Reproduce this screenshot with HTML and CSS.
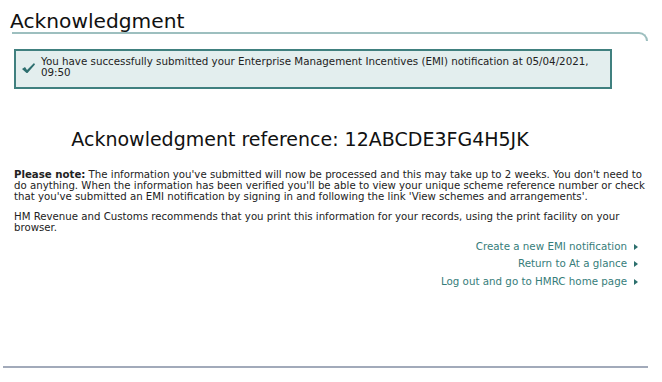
FILE: index.html
```html
<!DOCTYPE html>
<html lang="en">
<head>
<meta charset="UTF-8">
<title>Acknowledgment</title>
<link rel="stylesheet" href="styles.css">
</head>
<body>

<div class="page">
  <h1 class="title">Acknowledgment</h1>
  <div class="title-rule"></div>

  <!-- confirmation banner -->
  <div class="notice">
    <svg class="tick" width="15" height="12" viewBox="0 0 15 12">
      <path d="M1 7 L4 5 L6 8 L13 1 L14 2.5 L6.5 11 L5.5 11 Z" fill="#2d6f6f"/>
    </svg>
    <p>You have successfully submitted your Enterprise Management Incentives (EMI) notification at 05/04/2021, 09:50</p>
  </div>

  <h2 class="ref">Acknowledgment reference: 12ABCDE3FG4H5JK</h2>

  <p class="info"><b>Please note:</b> The information you've submitted will now be processed and this may take up to 2 weeks. You don't need to do anything. When the information has been verified you'll be able to view your unique scheme reference number or check that you've submitted an EMI notification by signing in and following the link 'View schemes and arrangements'.</p>
  <p class="info">HM Revenue and Customs recommends that you print this information for your records, using the print facility on your browser.</p>

  <ul class="links">
    <li><a href="#">Create a new EMI notification</a></li>
    <li><a href="#">Return to At a glance</a></li>
    <li><a href="#">Log out and go to HMRC home page</a></li>
  </ul>

  <div class="footer-rule"></div>
</div>

</body>
</html>
```

FILE: styles.css
```css
body{margin:0;background:#fff;font-family:"DejaVu Sans",Verdana,sans-serif;color:#222;}
.page{padding:0 14px 0 12px;}
.title{margin:0 0 0 -2px;padding:10px 0 0 0;font-size:20.2px;font-weight:normal;line-height:22px;color:#111;}
.title-rule{height:7px;margin:0;border-top:2px solid #9dbfbf;border-right:2px solid #9dbfbf;border-top-right-radius:11px;}
.notice{display:flex;align-items:flex-start;width:584px;margin:8px 0 0 2px;padding:5px 6px 9px 4px;border:2px solid #40807f;background:#e3eeee;}
.tick{flex:none;margin:6px 5px 0 1px;}
.notice p{margin:0;font-size:10.3px;line-height:11px;}
.ref{margin:39px 0 0 0;padding-right:60px;text-align:center;font-size:19px;font-weight:normal;line-height:22px;color:#111;}
.info{margin:18.5px -2px 0 2px;font-size:10.2px;line-height:11px;}
.info + .info{margin-top:9px;}
.links{list-style:none;margin:5px 10px 0 0;padding:0;text-align:right;font-size:10.3px;line-height:17.5px;}
.links a{color:#367d7a;text-decoration:none;}
.links a::after{content:"";display:inline-block;margin-left:7px;border-left:4px solid #2c6f6d;border-top:3.5px solid transparent;border-bottom:3.5px solid transparent;}
.footer-rule{margin:76px 0 0 -9px;height:2px;background:#a2aaba;}
```
